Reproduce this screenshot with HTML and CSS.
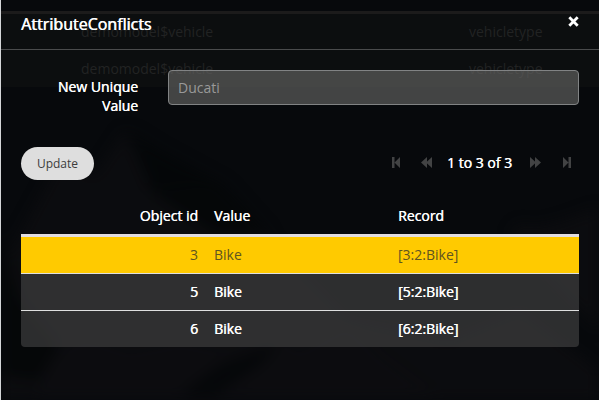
FILE: index.html
```html
<!DOCTYPE html>
<html lang="en">
<head>
<meta charset="utf-8">
<title>AttributeConflicts</title>
<link rel="stylesheet" href="styles.css">
</head>
<body>
<div class="backdrop">
  <svg class="mountains" viewBox="0 0 599 400" aria-hidden="true">
    <path class="ridge" d="M0 270 60 160 95 175 125 130 150 190 215 180 265 235 330 300 380 355 440 400H0z"/>
    <path class="ridge" d="M35 400 52 355 85 335 130 350 180 340 230 350 270 325 298 350 350 320 450 340 520 310 599 370V400z"/>
    <path class="shade" d="M128 130 155 195 215 235 270 235 225 185 160 150zM0 230 20 300 60 347 38 380 0 375zM180 395 220 365 280 342 260 365 215 395z"/>
    <path class="ridge" d="M510 235 520 224 534 228 560 222 599 208V330L560 290z"/>
  </svg>
  <div class="behind">
    <div class="behind-row"><span>demomodel$vehicle</span><span>vehicletype</span></div>
    <div class="behind-row"><span>demomodel$vehicle</span><span>vehicletype</span></div>
  </div>
</div>
<main class="dialog">
  <header class="dialog-header">
    <h1>AttributeConflicts</h1>
    <button class="close" aria-label="Close"><svg width="11" height="11" viewBox="0 0 11 11"><path d="M1.3 1.3 9.7 9.7M9.7 1.3 1.3 9.7"/></svg></button>
  </header>
  <div class="dialog-body">
    <div class="field">
      <label for="value">New Unique Value</label>
      <input id="value" type="text" value="Ducati">
    </div>
    <div class="toolbar">
      <button class="update">Update</button>
      <nav class="pager">
        <svg class="first" width="8" height="11" viewBox="0 0 8 11"><path d="M0 0H2.5V11H0zM8 0V11L2.5 5.5z"/></svg>
        <svg class="prev" width="11" height="11" viewBox="0 0 11 11"><path d="M6 0V11L0 5.5zM11 0V11L5 5.5z"/></svg>
        <span>1 to 3 of 3</span>
        <svg class="next" width="11" height="11" viewBox="0 0 11 11"><path d="M0 0V11L6 5.5zM5 0V11L11 5.5z"/></svg>
        <svg class="last" width="8" height="11" viewBox="0 0 8 11"><path d="M5.5 0H8V11H5.5zM0 0V11L5.5 5.5z"/></svg>
      </nav>
    </div>
    <div class="grid">
      <div class="row head"><span class="id">Object id</span><span>Value</span><span>Record</span></div>
      <div class="rows">
        <div class="row selected"><span class="id">3</span><span>Bike</span><span>[3:2:Bike]</span></div>
        <div class="row"><span class="id">5</span><span>Bike</span><span>[5:2:Bike]</span></div>
        <div class="row"><span class="id">6</span><span>Bike</span><span>[6:2:Bike]</span></div>
      </div>
    </div>
  </div>
</main>
</body>
</html>
```

FILE: styles.css
```css
* { box-sizing: border-box; }
body {
  margin: 0;
  height: 400px;
  overflow: hidden;
  background: #07090c;
  color: #fff;
  font: 14px/19px "Open Sans", sans-serif;
}
button { border: 0; padding: 0; font: inherit; }
svg { display: block; }
.backdrop { position: absolute; inset: 0; z-index: 0; }
.mountains { position: absolute; inset: 0; width: 100%; height: 100%; filter: blur(7px); }
.ridge { fill: #0d0e10; opacity: .75; }
.shade { fill: #040607; opacity: .8; }
.behind { position: relative; height: 76px; margin-top: 11px; border-top: 3px solid #1c1b1b; background: #0c0e0f; color: #222323; }
.behind-row { display: flex; height: 37px; padding: 8px 0 0 81px; }
.behind-row span:first-child { width: 388px; }
.dialog { position: relative; z-index: 1; height: 400px; border-left: 1px solid #d4d6d8; text-shadow: .4px 0 0 #fff; }
.dialog-header {
  display: flex;
  justify-content: space-between;
  align-items: flex-start;
  height: 50px;
  padding: 13px 20px 0;
  border-bottom: 1px solid #4a4b4c;
}
h1 { margin: 0; font-size: 16px; line-height: 22px; font-weight: 400; text-shadow: .6px 0 0 #fff; }
.close { margin-top: 3px; background: none; }
.close path { stroke: #fff; stroke-width: 2.8; }
.dialog-body { padding: 20px 20px 0; }
.field { display: flex; height: 35px; }
.field label { width: 117px; margin-right: 30px; padding: 7px 0 0 30px; text-align: right; }
.field input {
  flex: 1;
  height: 35px;
  padding: 0 9px;
  border: 1px solid #818384;
  border-radius: 4px;
  background: rgba(101, 101, 100, .64);
  color: #999;
  font: inherit;
}
.toolbar { display: flex; justify-content: space-between; height: 33px; margin-top: 42px; }
.update { width: 73px; border-radius: 17px; background: #dedede; color: #3c3c3c; font-size: 12px; text-shadow: none; }
.pager { display: flex; align-items: center; height: 30px; padding-right: 8px; }
.pager svg { fill: #424344; }
.prev { margin: 0 15px 0 21px; }
.next { margin: 0 22px 0 18px; }
.grid { margin-top: 17px; }
.row { display: grid; grid-template-columns: 177px 168px 1fr; column-gap: 16px; align-items: center; height: 36px; padding-bottom: 1px; }
.id { text-align: right; }
.head { height: 37px; padding-bottom: 1px; }
.rows { border-top: 3px solid #e1dce0; border-radius: 0 0 4px 4px; overflow: hidden; }
.rows .row { background: rgba(70, 70, 70, .61); }
.rows .row + .row { height: 37px; padding-bottom: 2px; border-top: 1px solid #dedfdf; background-clip: padding-box; }
.rows .selected { background: #ffca00; color: #5e5421; text-shadow: none; }
```
